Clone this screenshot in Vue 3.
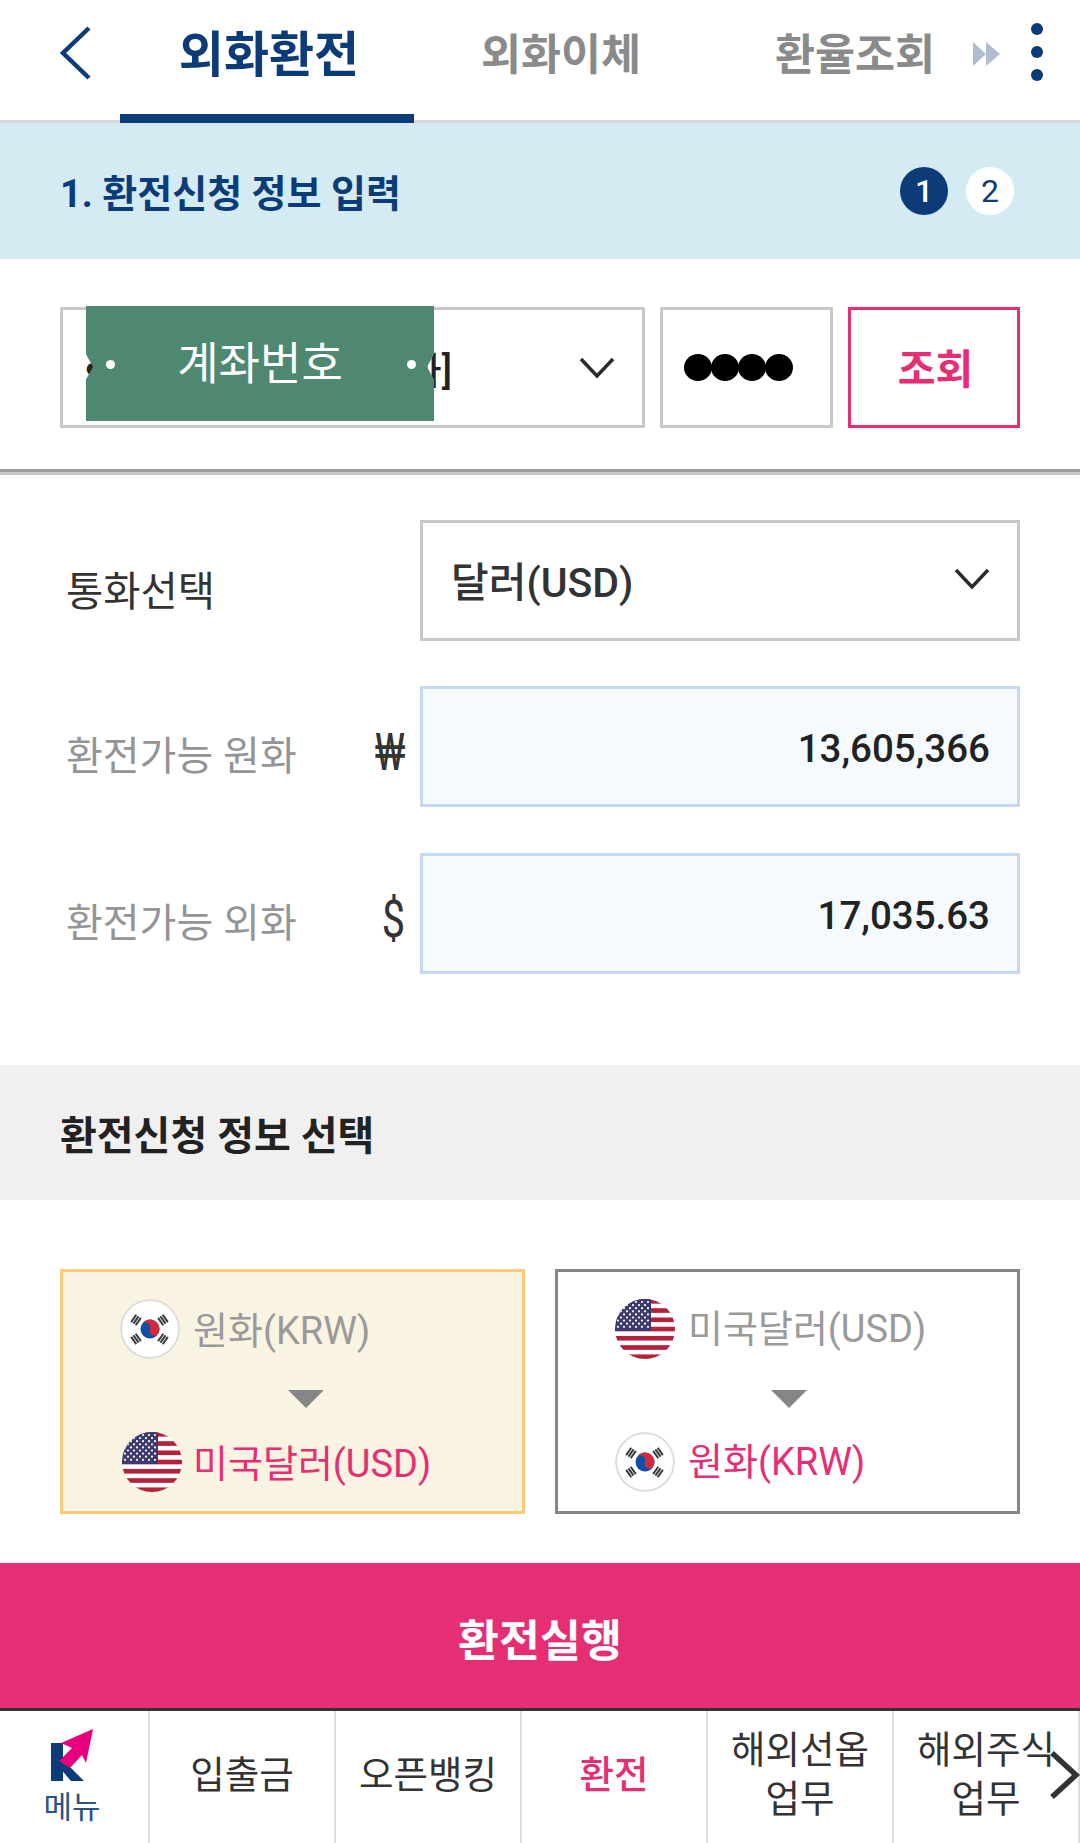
<script setup>
const tabs = ['외화환전', '외화이체', '환율조회']

const fields = [
  { label: '환전가능 원화', symbol: '₩', value: '13,605,366' },
  { label: '환전가능 외화', symbol: '$', value: '17,035.63' },
]

const cards = [
  { key: 'buy', from: 'kr', fromText: '원화(KRW)', to: 'us', toText: '미국달러(USD)' },
  { key: 'sell', from: 'us', fromText: '미국달러(USD)', to: 'kr', toText: '원화(KRW)' },
]

const nav = [
  { lines: ['입출금'] },
  { lines: ['오픈뱅킹'] },
  { lines: ['환전'], active: true },
  { lines: ['해외선옵', '업무'] },
  { lines: ['해외주식', '업무'] },
]

const stars = []
for (let row = 0; row < 9; row++) {
  const count = row % 2 ? 5 : 6
  for (let col = 0; col < count; col++) {
    stars.push({ x: (row % 2 ? 6 : 3) + col * 6, y: 3 + row * 3.1 })
  }
}
const stripes = [0, 2, 4, 6, 8, 10, 12].map((i) => i * 4.62)
const trigrams = [
  { x: 16, y: 21, r: -55 },
  { x: 43, y: 21, r: 55 },
  { x: 16, y: 40, r: 55 },
  { x: 43, y: 40, r: -55 },
]
</script>

<template>
  <div class="page">
    <svg class="defs" width="0" height="0" aria-hidden="true">
      <symbol id="flag-us" viewBox="0 0 60 60">
        <rect width="60" height="60" fill="#fff" />
        <rect v-for="y in stripes" :key="y" x="0" :y="y" width="60" height="4.62" fill="#b5203a" />
        <rect width="36" height="32" fill="#3c3b6e" />
        <circle v-for="s in stars" :key="s.x + '-' + s.y" :cx="s.x" :cy="s.y" r="1.1" fill="#fff" />
      </symbol>
      <symbol id="flag-kr" viewBox="0 0 60 60">
        <circle cx="30" cy="30" r="29" fill="#fff" stroke="#dcdcdc" stroke-width="2" />
        <g transform="rotate(22 30 30)">
          <circle cx="30" cy="30" r="9.5" fill="#0f4fa8" />
          <path d="M20.5 30a9.5 9.5 0 0 1 19 0a4.75 4.75 0 0 1-9.5 0a4.75 4.75 0 0 0-9.5 0z" fill="#d6293e" />
        </g>
        <g v-for="t in trigrams" :key="t.x + '' + t.y" :transform="`translate(${t.x} ${t.y}) rotate(${t.r})`" fill="#3a3a3a">
          <rect x="-4.5" y="-3.8" width="9" height="2" />
          <rect x="-4.5" y="-1" width="9" height="2" />
          <rect x="-4.5" y="1.8" width="9" height="2" />
        </g>
      </symbol>
    </svg>

    <header class="topbar">
      <button class="back" aria-label="뒤로">
        <svg width="34" height="54" viewBox="0 0 34 54"><path d="M30 2 L4 27 L30 52" fill="none" stroke="#0c3c78" stroke-width="4.5" /></svg>
      </button>
      <div v-for="(tab, i) in tabs" :key="tab" class="tab" :class="{ 'tab-active': i === 0 }">{{ tab }}</div>
      <svg class="more-arrows" width="27" height="24" viewBox="0 0 27 24">
        <path d="M0 0 L13 12 L0 24 Z M13 0 L27 12 L13 24 Z" fill="#aebdcf" />
      </svg>
      <div class="kebab"><i></i><i></i><i></i></div>
    </header>

    <section class="banner">
      <h1 class="banner-title">1. 환전신청 정보 입력</h1>
      <div class="steps">
        <span class="step step-on">1</span>
        <span class="step">2</span>
      </div>
    </section>

    <section class="account">
      <div class="account-select">
        <div class="account-text">
          <span class="account-dot">●</span>
          <span>[외화]</span>
        </div>
        <svg class="chev" width="36" height="22" viewBox="0 0 36 22"><path d="M2 2 L18 19 L34 2" fill="none" stroke="#2b2b2b" stroke-width="3.5" /></svg>
        <div class="mask">계좌번호<i class="mask-dot mask-dot-l"></i><i class="mask-dot mask-dot-r"></i></div>
      </div>
      <div class="account-pw"><i></i><i></i><i></i><i></i></div>
      <button class="account-btn">조회</button>
    </section>

    <section class="form">
      <div class="form-row">
        <label class="form-label form-label-strong">통화선택</label>
        <div class="field field-select">
          <span>달러(USD)</span>
          <svg width="36" height="22" viewBox="0 0 36 22"><path d="M2 2 L18 19 L34 2" fill="none" stroke="#2b2b2b" stroke-width="3.5" /></svg>
        </div>
      </div>
      <div v-for="f in fields" :key="f.label" class="form-row">
        <label class="form-label">{{ f.label }}</label>
        <span class="form-symbol">{{ f.symbol }}</span>
        <div class="field field-value">{{ f.value }}</div>
      </div>
    </section>

    <h2 class="subhead">환전신청 정보 선택</h2>

    <section class="cards">
      <div v-for="c in cards" :key="c.key" class="card" :class="'card-' + c.key">
        <div class="pair">
          <svg class="flag" width="60" height="60"><use :href="'#flag-' + c.from" /></svg>
          <span class="pair-from">{{ c.fromText }}</span>
        </div>
        <div class="tri"></div>
        <div class="pair">
          <svg class="flag" width="60" height="60"><use :href="'#flag-' + c.to" /></svg>
          <span class="pair-to">{{ c.toText }}</span>
        </div>
      </div>
    </section>

    <button class="submit">환전실행</button>

    <nav class="bottom">
      <div class="bottom-menu">
        <svg width="44" height="54" viewBox="0 0 44 54">
          <rect x="1" y="14" width="12" height="38" fill="#0c3c78" />
          <path d="M11 33 L20 38 L34 52 L21 52 L9 38 Z" fill="#0c3c78" />
          <path d="M43 0 L11 14 L22 19 L9 32 L20 39 L32 26 L36 34 Z" fill="#e6007e" />
        </svg>
        <span>메뉴</span>
      </div>
      <div v-for="n in nav" :key="n.lines[0]" class="bottom-item" :class="{ 'bottom-on': n.active }">
        <span v-for="l in n.lines" :key="l">{{ l }}</span>
      </div>
      <svg class="bottom-next" width="30" height="50" viewBox="0 0 30 50"><path d="M2 3 L26 25 L2 47" fill="none" stroke="#333" stroke-width="5.5" /></svg>
    </nav>
  </div>
</template>

<style scoped>
.page {
  width: 1080px;
  height: 1843px;
  display: flex;
  flex-direction: column;
  overflow: hidden;
  background: #fff;
  font-family: Roboto, "Noto Sans CJK KR", sans-serif;
  color: #333;
}
button {
  font-family: inherit;
  padding: 0;
  border: 0;
  background: none;
}
.defs { flex: none; }

.topbar {
  position: relative;
  flex: none;
  height: 123px;
  display: flex;
  box-shadow: inset 0 -3px 0 #d9d9d9;
}
.back {
  width: 120px;
  flex: none;
  display: flex;
  align-items: flex-start;
  padding: 26px 0 0 59px;
}
.back svg { display: block; }
.tab {
  width: 294px;
  flex: none;
  padding-top: 29px;
  text-align: center;
  font-size: 43.5px;
  line-height: 54px;
  font-weight: 700;
  color: #8a8a8a;
  white-space: nowrap;
}
.tab-active {
  box-sizing: border-box;
  padding-left: 4px;
  font-size: 49px;
  color: #0c3c78;
  border-bottom: 9px solid #0c3c78;
}
.more-arrows {
  position: absolute;
  left: 973px;
  top: 42px;
}
.kebab {
  position: absolute;
  left: 1031px;
  top: 23px;
  display: flex;
  flex-direction: column;
  gap: 11px;
}
.kebab i {
  width: 12px;
  height: 12px;
  border-radius: 50%;
  background: #0c3c78;
}

.banner {
  flex: none;
  height: 136px;
  padding: 0 66px 0 60px;
  display: flex;
  align-items: center;
  justify-content: space-between;
  background: #d4ebf4;
}
.banner-title {
  margin: 0 0 2px;
  font-size: 38px;
  font-weight: 700;
  color: #0c3c78;
}
.steps { display: flex; gap: 18px; }
.step {
  width: 48px;
  height: 48px;
  border-radius: 50%;
  background: #fff;
  color: #0c3c78;
  font-size: 32px;
  line-height: 48px;
  text-align: center;
}
.step-on { background: #0c3c78; color: #fff; font-weight: 500; }

.account {
  flex: none;
  height: 213px;
  padding: 48px 60px 0;
  box-sizing: border-box;
  display: flex;
  gap: 15px;
  align-items: flex-start;
  border-bottom: 3px solid #9c9c9c;
  box-shadow: 0 3px 0 #c8c8c8;
}
.account-select,
.account-pw,
.account-btn {
  height: 121px;
  box-sizing: border-box;
  border: 3px solid #c8c8c8;
}
.account-select {
  position: relative;
  width: 585px;
  display: flex;
  align-items: center;
}
.account-text {
  width: 389px;
  flex: none;
  display: flex;
  align-items: center;
  justify-content: space-between;
  padding-left: 23px;
  box-sizing: border-box;
  white-space: nowrap;
  font-size: 38px;
  font-weight: 500;
  color: #222;
}
.account-dot { font-size: 14px; }
.chev { margin-left: 127px; }
.mask {
  position: absolute;
  left: 23px;
  top: -4px;
  width: 348px;
  height: 115px;
  background: #4e8870;
  color: #fff;
  font-size: 45px;
  line-height: 118px;
  text-align: center;
  clip-path: polygon(0 0, 100% 0, 100% 42%, 98% 53%, 100% 64%, 100% 100%, 0 100%, 0 64%, 2% 53%, 0 42%);
}
.mask-dot {
  position: absolute;
  top: 54px;
  width: 9px;
  height: 9px;
  border-radius: 50%;
  background: #fff;
}
.mask-dot-l { left: 20px; }
.mask-dot-r { right: 18px; }
.account-pw {
  width: 173px;
  padding-left: 21px;
  display: flex;
  align-items: center;
}
.account-pw i {
  width: 28px;
  height: 27px;
  margin-right: -1px;
  border-radius: 50%;
  background: #000;
}
.account-btn {
  width: 172px;
  padding: 0 0 4px 3px;
  border-color: #e52e73;
  color: #e52e73;
  font-size: 41px;
  font-weight: 700;
}

.form {
  flex: none;
  height: 593px;
  padding-top: 48px;
  box-sizing: border-box;
  display: flex;
  flex-direction: column;
  gap: 45px;
}
.form-row {
  height: 121px;
  flex: none;
  padding: 0 60px 0 66px;
  display: flex;
  align-items: center;
}
.form-row:last-child { margin-top: 1px; }
.form-label {
  flex: 1;
  padding-top: 12px;
  font-size: 40px;
  color: #949494;
}
.form-label-strong {
  padding-top: 15px;
  color: #333;
  font-size: 40.5px;
}
.form-symbol {
  margin-right: 15px;
  padding-top: 12px;
  font-size: 52px;
  line-height: 1;
  color: #333;
  transform: scaleX(0.8);
  transform-origin: right center;
}
.field {
  width: 600px;
  height: 121px;
  box-sizing: border-box;
  display: flex;
  align-items: center;
  justify-content: space-between;
  padding: 0 27px 0 28px;
  border: 3px solid #c8c8c8;
}
.field-select {
  padding-bottom: 4px;
  font-size: 41px;
  font-weight: 500;
}
.field-value {
  justify-content: flex-end;
  padding-top: 3px;
  background: #f5fafe;
  border-color: #c5daf2;
  font-size: 38.5px;
  font-weight: 500;
  color: #222;
}

.subhead {
  flex: none;
  height: 135px;
  margin: 0;
  padding-left: 60px;
  display: flex;
  align-items: center;
  background: #f0f0f0;
  font-size: 40px;
  font-weight: 700;
  color: #222;
}

.cards {
  flex: none;
  height: 363px;
  padding: 69px 60px 0;
  box-sizing: border-box;
  display: flex;
  gap: 30px;
}
.card {
  width: 465px;
  height: 245px;
  box-sizing: border-box;
  padding: 27px 0 0 57px;
  border: 3px solid #868686;
  font-size: 38px;
}
.card-buy {
  background: #f9f3e2;
  border-color: #fdca75;
}
.pair {
  height: 60px;
  display: flex;
  align-items: center;
  gap: 13px;
}
.card-buy .pair:last-child {
  padding-left: 2px;
  gap: 11px;
}
.pair span { padding-bottom: 3px; }
.card-sell .pair span { padding-bottom: 7px; }
.flag {
  flex: none;
  border-radius: 50%;
}
.pair-from { color: #9a9a9a; }
.pair-to { color: #e52e73; }
.tri {
  width: 0;
  height: 0;
  margin: 31px 0 24px 156px;
  border-left: 18px solid transparent;
  border-right: 18px solid transparent;
  border-top: 18px solid #868686;
}
.card-buy .tri { margin-left: 168px; }

.submit {
  flex: none;
  height: 145px;
  padding-top: 4px;
  background: #e52e73;
  color: #fff;
  font-size: 44.5px;
  font-weight: 700;
}

.bottom {
  position: relative;
  flex: 1;
  display: flex;
  border-top: 3px solid #333;
  background: #fff;
}
.bottom-menu,
.bottom-item {
  flex: none;
  box-sizing: border-box;
  border-right: 2px solid #ddd;
  display: flex;
  flex-direction: column;
  align-items: center;
}
.bottom-menu {
  width: 150px;
  padding: 18px 4px 0 0;
  color: #2c5287;
  font-size: 31px;
  line-height: 50px;
}
.bottom-menu svg { display: block; }
.bottom-item {
  width: 186px;
  justify-content: center;
  padding-bottom: 4px;
  font-size: 37.5px;
  line-height: 49px;
  white-space: nowrap;
}
.bottom-on {
  color: #e52e73;
  font-weight: 500;
}
.bottom-next {
  position: absolute;
  right: 0;
  top: 39px;
}
</style>
